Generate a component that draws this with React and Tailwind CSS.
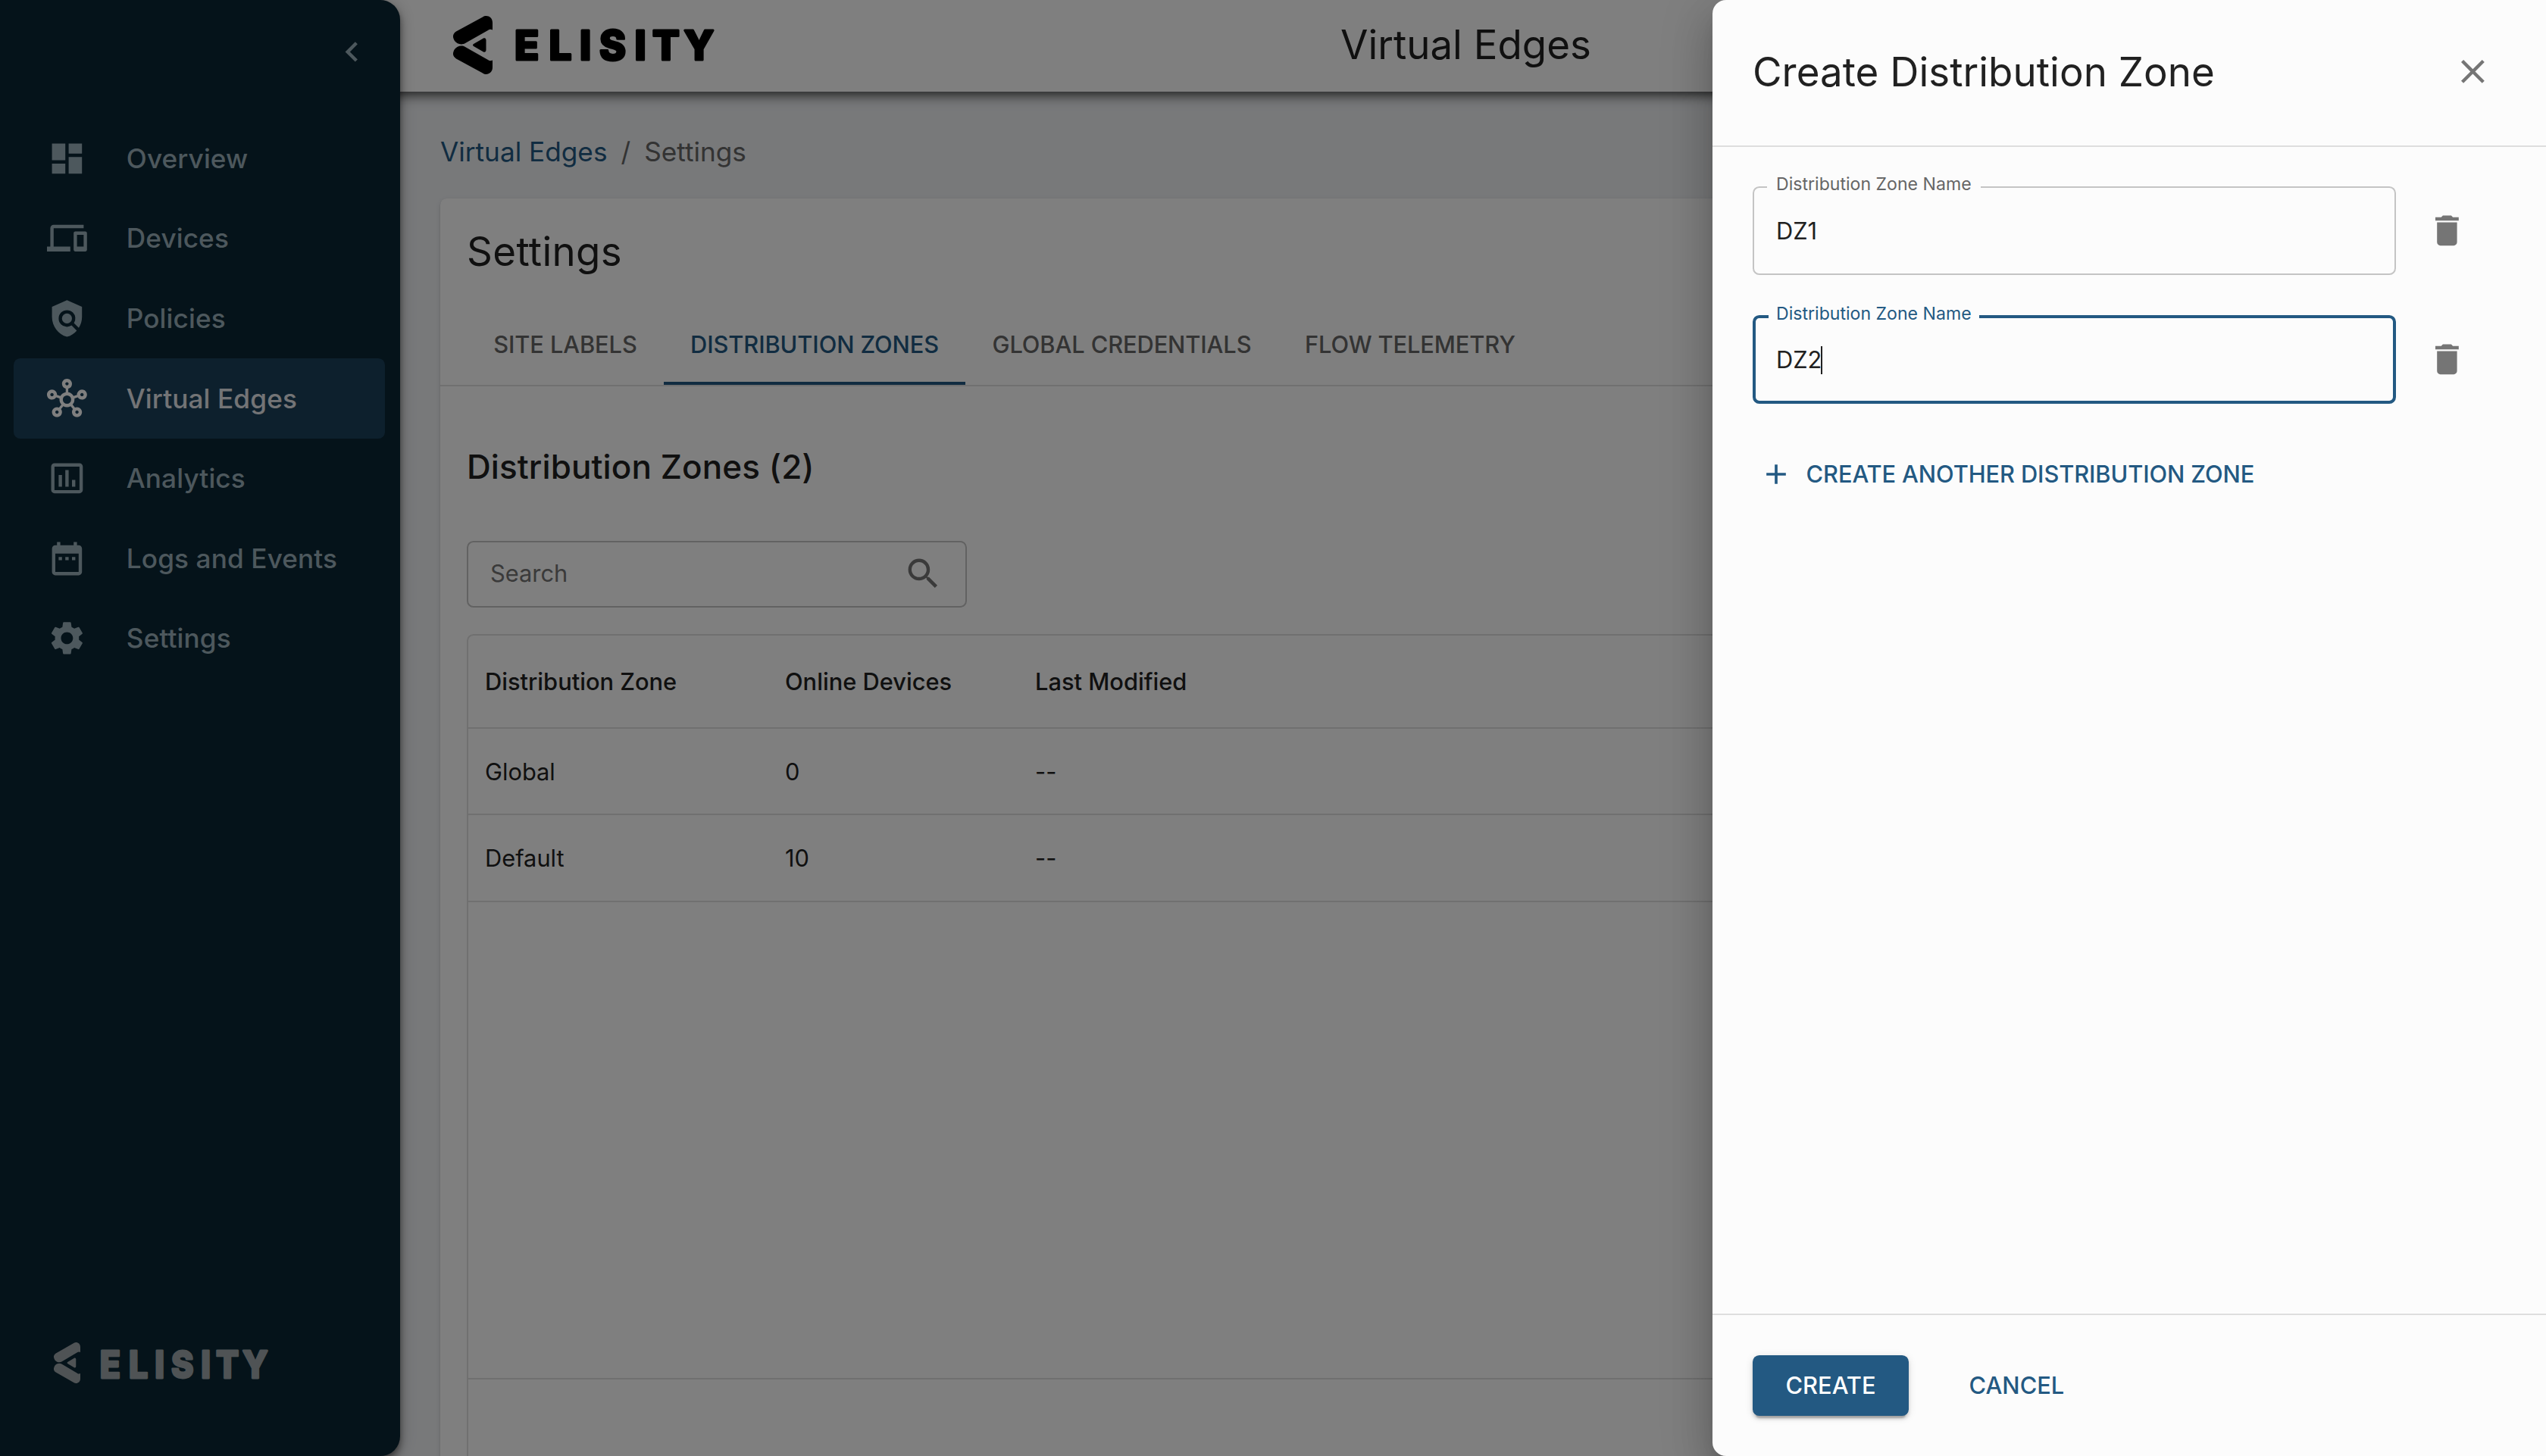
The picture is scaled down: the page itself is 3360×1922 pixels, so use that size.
import React from 'react';
import {
    MdAdd,
    MdChevronLeft,
    MdClose,
    MdDashboard,
    MdDateRange,
    MdDelete,
    MdDevices,
    MdInsertChartOutlined,
    MdOutlineHub,
    MdPolicy,
    MdSearch,
    MdSettings,
} from 'react-icons/md';

const navItems = [
    { label: 'Overview', icon: MdDashboard },
    { label: 'Devices', icon: MdDevices },
    { label: 'Policies', icon: MdPolicy },
    { label: 'Virtual Edges', icon: MdOutlineHub, active: true },
    { label: 'Analytics', icon: MdInsertChartOutlined },
    { label: 'Logs and Events', icon: MdDateRange },
    { label: 'Settings', icon: MdSettings },
];

const tabs = ['Site Labels', 'Distribution Zones', 'Global Credentials', 'Flow Telemetry'];

const zones = [
    { name: 'Global', devices: 0, modified: '--' },
    { name: 'Default', devices: 10, modified: '--' },
];

const LogoMark = ({ className }) => (
    <svg viewBox="0 0 52 77" preserveAspectRatio="none" fill="currentColor" className={className}>
        <path d="M39 1.6C44-2 52 1 52 9V18.500C50 17.500 48 17.500 46 19L16 36C11 39 5 37 2 33C-1 28-1 24 4 20.500Z" />
        <path d="M39 75.400C44 79 52 76 52 68V58.500C50 59.500 48 59.500 46 58L16 41C11 38 5 40 2 44C-1 49-1 53 4 56.500Z" />
        <path d="M27 37L40 29.500C42 28.500 43.500 30 43.500 32V45C43.500 47 42 48.500 40 47.500L27 40Q25 38.500 27 37Z" />
    </svg>
);

const Wordmark = ({ className }) => (
    <svg viewBox="0 0 280 72" preserveAspectRatio="none" className={className}>
        <text
            y="55"
            x="2 47.500 88 114 160.500 184 225.500"
            fill="currentColor"
            stroke="currentColor"
            strokeWidth="3"
            strokeLinejoin="round"
            className="font-['Inter',sans-serif] text-[53px] font-extrabold"
        >
            ELISITY
        </text>
    </svg>
);

const Sidebar = () => (
    <aside className="relative z-20 flex w-[528px] shrink-0 flex-col rounded-r-[26px] bg-[#0b2634] text-[#9bb0ba] shadow-[0_4px_9px_-2px_rgba(0,0,0,0.4),0_9px_11px_rgba(0,0,0,0.28),0_2px_22px_rgba(0,0,0,0.24)]">
        <div className="flex h-[156.5px] shrink-0 justify-end pr-[37px] pt-[42px]">
            <MdChevronLeft className="size-[52.8px]" />
        </div>
        <nav className="flex flex-col pl-[18px] pr-[20px]">
            {navItems.map(({ label, icon: Icon, active }) => (
                <div
                    key={label}
                    className={`flex h-[105.6px] items-center rounded-[8.8px] pl-[44px] text-[35.2px] font-medium tracking-[0.003em] ${active ? 'bg-[#1a405a] text-[#e6e9ec]' : ''}`}
                >
                    <Icon className={`mr-[52px] size-[52.8px] ${active ? 'text-white' : ''}`} />
                    <span>{label}</span>
                </div>
            ))}
        </nav>
        <div className="mt-auto mb-[90px] flex items-center pl-[71px] text-[#9fa6aa]">
            <LogoMark className="h-[54px] w-[35px]" />
            <Wordmark className="mt-[3px] -mb-[3px] ml-[24px] h-[67px] w-[236px]" />
        </div>
    </aside>
);

const TopBar = () => (
    <header className="relative z-10 flex h-[121px] shrink-0 items-center bg-white pb-[2px] shadow-[0_4px_9px_-2px_rgba(0,0,0,0.4),0_9px_11px_rgba(0,0,0,0.28),0_2px_22px_rgba(0,0,0,0.24)]">
        <LogoMark className="h-[77px] w-[52px] text-black" />
        <Wordmark className="ml-[27px] h-[72px] w-[280px] text-black" />
        <h1 className="ml-[812px] text-[52.8px] text-[#212121]">Virtual Edges</h1>
    </header>
);

const ZonesTable = () => (
    <div className="mt-[35px] h-[1200px] rounded-[8.8px] border-2 border-[#e0e0e0] text-[30.8px] text-[#212121]">
        <div className="grid h-[123px] grid-cols-[396px_330px_1fr] items-center border-b-2 border-[#e0e0e0] pl-[22px] pt-[2px] font-medium">
            <span>Distribution Zone</span>
            <span>Online Devices</span>
            <span>Last Modified</span>
        </div>
        <div className="h-[859px] border-b-2 border-[#e0e0e0]">
            {zones.map((zone) => (
                <div
                    key={zone.name}
                    className="grid h-[114.4px] grid-cols-[396px_330px_1fr] items-center border-b-2 border-[#e0e0e0] pl-[22px] pt-[2px]"
                >
                    <span>{zone.name}</span>
                    <span>{zone.devices}</span>
                    <span>{zone.modified}</span>
                </div>
            ))}
        </div>
    </div>
);

const SettingsPage = () => (
    <main className="flex flex-1 flex-col bg-[#f0f2f5] pr-[53px]">
        {/* Breadcrumb */}
        <div className="flex h-[141px] shrink-0 items-center pt-[18px] text-[35.2px] text-[#666]">
            <span className="text-[#235982]">Virtual Edges</span>
            <span className="mx-[18px]">/</span>
            <span>Settings</span>
        </div>
        <section className="flex-1 rounded-t-[8.8px] bg-white shadow-[0_4px_2px_-2px_rgba(0,0,0,0.2),0_2px_2px_rgba(0,0,0,0.14),0_2px_6px_rgba(0,0,0,0.12)]">
            <h2 className="flex h-[140px] items-center px-[35px] pt-[2px] text-[52.8px] tracking-[0.007em] text-[#212121]">
                Settings
            </h2>
            <div className="flex h-[108px] border-b-2 border-[#e0e0e0] px-[35px]">
                {tabs.map((tab) => (
                    <div
                        key={tab}
                        className={`flex items-center px-[35.2px] text-[30.8px] font-medium uppercase tracking-[-0.003em] ${tab === 'Distribution Zones' ? 'border-b-4 border-[#235982] pt-1 text-[#235982]' : 'text-[#666]'}`}
                    >
                        {tab}
                    </div>
                ))}
            </div>
            <div className="px-[35px]">
                <h3 className="flex h-[204px] items-center pt-[8px] text-[44px] font-medium tracking-[0.002em] text-[#212121]">
                    Distribution Zones (2)
                </h3>
                <div className="flex h-[88px] w-[660px] items-center justify-between rounded-[8.8px] border-2 border-[#c4c4c4] pb-[2px] pl-[29px] pr-[29px] text-[30.8px] text-[#757575]">
                    <span>Search</span>
                    <MdSearch className="size-[52.8px]" />
                </div>
                <ZonesTable />
            </div>
        </section>
    </main>
);

const ZoneField = ({ value, focused }) => (
    <div className="flex h-[117px] items-center">
        <div
            className={`relative flex h-full w-[849px] items-center rounded-[8.8px] pt-[2px] text-[30.8px] tracking-[-0.003em] text-[#212121] ${focused ? 'border-4 border-[#235982] pl-[27px]' : 'border-2 border-[#c4c4c4] pl-[29px]'}`}
        >
            {/* Floating label sits over the top border */}
            <span
                className={`absolute bg-[#fcfcfc] text-[23.1px] leading-[28px] tracking-normal ${focused ? '-top-[20px] left-[17px] px-[10px] text-[#235982]' : '-top-[19px] left-[17px] px-[12px] text-[#666]'}`}
            >
                Distribution Zone Name
            </span>
            <span>{value}</span>
            {focused && <span className="-ml-px h-[37px] w-[2px] bg-[#212121]" />}
        </div>
        <MdDelete className="ml-[41px] size-[52.8px] text-[#757575]" />
    </div>
);

const CreateZoneDrawer = () => (
    <div className="absolute inset-y-0 right-0 z-40 flex w-[1100px] flex-col rounded-l-[18px] bg-[#fcfcfc] shadow-[0_18px_22px_-11px_rgba(0,0,0,0.2),0_35px_53px_4px_rgba(0,0,0,0.14),0_13px_66px_11px_rgba(0,0,0,0.12)]">
        <div className="flex h-[194px] items-center justify-between border-b-2 border-[#dedede] pl-[53px] pr-[70px]">
            <h2 className="text-[52.8px] tracking-[0.001em] text-[#212121]">Create Distribution Zone</h2>
            <MdClose className="mb-[3px] size-[52.8px] text-[#757575]" />
        </div>
        <div className="flex flex-1 flex-col gap-[53px] px-[53px] pt-[52px]">
            <ZoneField value="DZ1" />
            <ZoneField value="DZ2" focused />
            <button className="flex h-[80px] items-center gap-[17.6px] pl-[9px] text-[30.8px] font-medium uppercase tracking-[-0.003em] text-[#235982]">
                <MdAdd className="size-[44px]" />
                Create another distribution zone
            </button>
        </div>
        <div className="flex h-[188px] items-start border-t-2 border-[#dedede] pl-[53px] pt-[53px] text-[30.8px] font-medium">
            <button className="h-[80px] w-[206px] rounded-[8.8px] bg-[#235982] uppercase text-white shadow-[0_7px_2px_-4px_rgba(0,0,0,0.2),0_4px_4px_rgba(0,0,0,0.14),0_2px_11px_rgba(0,0,0,0.12)]">
                Create
            </button>
            <button className="ml-[62px] h-[80px] px-[17.6px] uppercase text-[#235982]">Cancel</button>
        </div>
    </div>
);

const App = () => (
    <div className="relative flex h-[1922px] w-[3360px] overflow-hidden bg-[#f0f2f5] font-['Inter',sans-serif]">
        <Sidebar />
        {/* Content runs under the sidebar's rounded corners */}
        <div className="-ml-[28px] flex flex-1 flex-col [&>header]:pl-[98px] [&>main]:pl-[81px]">
            <TopBar />
            <SettingsPage />
        </div>
        <div className="absolute inset-0 z-30 bg-black/50" />
        <CreateZoneDrawer />
    </div>
);

export default App;
